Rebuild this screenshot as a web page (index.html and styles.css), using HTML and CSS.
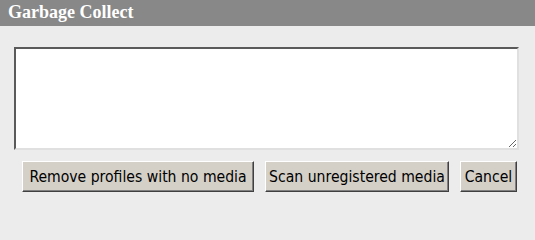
FILE: index.html
```html
<!DOCTYPE html>
<html>
<head>
<meta charset="utf-8">
<link rel="stylesheet" href="styles.css">
</head>
<body>
<div class="dialog">
  <div class="title">Garbage Collect</div>
  <div class="content">
    <textarea class="log"></textarea>
    <div class="actions">
      <button class="btn btn-remove">Remove profiles with no media</button>
      <button class="btn btn-scan">Scan unregistered media</button>
      <button class="btn btn-cancel">Cancel</button>
    </div>
  </div>
</div>
</body>
</html>
```
FILE: styles.css
```css
html, body {
  margin: 0;
  padding: 0;
  background: #ececec;
}
.dialog {
  width: 535px;
  height: 210px;
  background: #ececec;
}
.title {
  height: 26px;
  background: #888888;
  color: #ffffff;
  font-family: "Liberation Serif", serif;
  font-weight: bold;
  font-size: 18px;
  line-height: 25px;
  padding-left: 8px;
}
.content {
  padding: 21px 16px 0 14px;
  display: flex;
  flex-direction: column;
}
.log {
  box-sizing: border-box;
  width: 505px;
  height: 103px;
  margin: 0;
  background: #ffffff;
  border: 2px solid;
  border-color: #5a5a5a #e0e0e0 #e0e0e0 #5a5a5a;
  resize: both;
  padding: 2px;
}
.actions {
  display: flex;
  justify-content: flex-end;
  gap: 11px;
  margin-top: 11px;
  padding-right: 2px;
}
.btn {
  box-sizing: border-box;
  height: 31px;
  margin: 0;
  padding: 0;
  white-space: nowrap;
  background: #d4d0c8;
  color: #000000;
  font-family: "DejaVu Sans", sans-serif;
  font-stretch: condensed;
  font-size: 15.6px;
  border: 1px solid;
  border-color: #ffffff #404040 #404040 #ffffff;
  box-shadow: inset -1px -1px 0 #808080;
}
.btn-remove { width: 232px; }
.btn-scan { width: 184px; }
.btn-cancel { width: 57px; }
```
